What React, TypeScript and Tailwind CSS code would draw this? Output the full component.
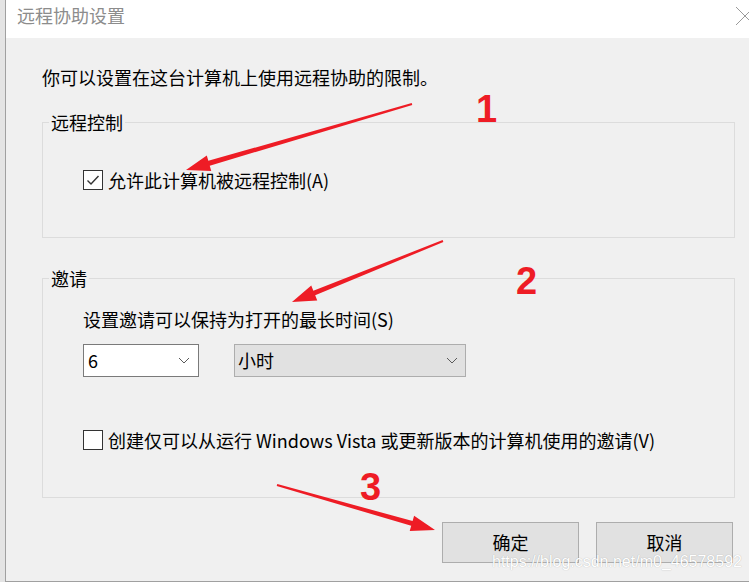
import type { ReactNode } from "react";

const font = '"Noto Sans CJK SC", "Noto Sans", sans-serif';

function Chevron() {
  return (
    <svg width="12" height="7" viewBox="0 0 12 7" fill="none">
      <path d="M1 1l5 5 5-5" stroke="#5a5a5a" strokeWidth="1" />
    </svg>
  );
}

function CheckBox({ checked, children }: { checked?: boolean; children: ReactNode }) {
  return (
    <div className="flex items-center gap-[5px] h-[24px]">
      <div className="w-[20px] h-[20px] border border-[#333333] bg-white flex items-center justify-center">
        {checked && (
          <svg width="14" height="12" viewBox="0 0 14 12" fill="none">
            <path d="M1.5 6.5l3.5 3.5 7.5-8" stroke="#333333" strokeWidth="1.4" />
          </svg>
        )}
      </div>
      <span className="text-[18px] leading-[24px] text-black">{children}</span>
    </div>
  );
}

function Group({ title, children, className }: { title: string; children: ReactNode; className?: string }) {
  return (
    <fieldset className={`border border-[#dcdcdc] ml-[36px] mr-[14px] px-[40px] ${className ?? ""}`}>
      <legend className="-ml-[34px] px-[2px] text-[18px] leading-[24px] text-black">{title}</legend>
      {children}
    </fieldset>
  );
}

type Pt = [number, number];

function arrowPoints(tail: Pt, tip: Pt) {
  const dx = tip[0] - tail[0];
  const dy = tip[1] - tail[1];
  const len = Math.hypot(dx, dy);
  const ux = dx / len;
  const uy = dy / len;
  const nx = -uy;
  const ny = ux;
  const headLen = 24;
  const bx = tip[0] - ux * headLen;
  const by = tip[1] - uy * headLen;
  const p = (x: number, y: number, w: number) => `${x + nx * w},${y + ny * w}`;
  return [
    p(tail[0], tail[1], 1),
    p(bx, by, 2.5),
    p(bx, by, 8),
    `${tip[0]},${tip[1]}`,
    p(bx, by, -8),
    p(bx, by, -2.5),
    p(tail[0], tail[1], -1),
  ].join(" ");
}

const arrows: [Pt, Pt][] = [
  [[412, 104], [186, 170]],
  [[443, 241], [292, 302]],
  [[277, 485], [435, 530]],
];

export default function App() {
  return (
    <div className="relative w-[749px] h-[582px] overflow-hidden bg-[#e4e4e4] pl-[5px]" style={{ fontFamily: font }}>
      <div className="h-[582px] flex flex-col border-l border-b border-[#a0a0a0] bg-[#f0f0f0]">
        <div className="h-[38px] bg-white flex items-center pl-[11px] pb-[7px]">
          <span className="text-[18px] text-[#8c8c8c]">远程协助设置</span>
          <svg className="ml-auto -mr-[4px]" width="18" height="22" viewBox="0 0 18 22" fill="none">
            <path d="M1 2l18 18M19 2L1 20" stroke="#9a9a9a" strokeWidth="1" />
          </svg>
        </div>

        <div className="pt-[27px]">
          <p className="pl-[36px] text-[18px] leading-[24px] text-black">你可以设置在这台计算机上使用远程协助的限制。</p>

          <Group title="远程控制" className="mt-[21px] pt-[34px] pb-[45px]">
            <CheckBox checked>允许此计算机被远程控制(A)</CheckBox>
          </Group>

          <Group title="邀请" className="mt-[28px] pt-[17px] pb-[45px]">
            <p className="text-[18px] leading-[24px] text-black">设置邀请可以保持为打开的最长时间(S)</p>
            <div className="mt-[13px] flex gap-[35px]">
              <div className="w-[116px] h-[33px] bg-white border border-[#7a7a7a] flex items-center justify-between pl-[4px] pr-[8px]">
                <span className="text-[18px] text-black">6</span>
                <Chevron />
              </div>
              <div className="w-[232px] h-[33px] bg-[#e1e1e1] border border-[#adadad] flex items-center justify-between pl-[3px] pr-[7px]">
                <span className="text-[18px] text-black">小时</span>
                <Chevron />
              </div>
            </div>
            <div className="mt-[51px]">
              <CheckBox>创建仅可以从运行 Windows Vista 或更新版本的计算机使用的邀请(V)</CheckBox>
            </div>
          </Group>

          <div className="mt-[24px] flex justify-end gap-[17px] pr-[16px]">
            <button className="w-[137px] h-[41px] bg-[#e1e1e1] border border-[#adadad] text-[18px] text-black">确定</button>
            <button className="w-[137px] h-[41px] bg-[#e1e1e1] border border-[#adadad] text-[18px] text-black">取消</button>
          </div>
        </div>
      </div>

      <svg className="absolute inset-0 pointer-events-none" width="749" height="582">
        {arrows.map(([tail, tip], i) => (
          <polygon key={i} points={arrowPoints(tail, tip)} fill="#ee1c25" />
        ))}
      </svg>

      <span className="absolute left-[476px] top-[90px] text-[38px] leading-none font-bold text-[#ee1c25]" style={{ fontFamily: '"Liberation Sans", sans-serif' }}>1</span>
      <span className="absolute left-[516px] top-[262px] text-[38px] leading-none font-bold text-[#ee1c25]" style={{ fontFamily: '"Liberation Sans", sans-serif' }}>2</span>
      <span className="absolute left-[360px] top-[468px] text-[38px] leading-none font-bold text-[#ee1c25]" style={{ fontFamily: '"Liberation Sans", sans-serif' }}>3</span>

      <span
        className="absolute left-[492px] top-[552px] text-[16px] leading-[20px] text-white [text-shadow:0_0_1px_rgba(0,0,0,0.3)]"
        style={{ fontFamily: '"Liberation Sans", sans-serif' }}
      >
        https://blog.csdn.net/m0_46578592
      </span>
    </div>
  );
}
